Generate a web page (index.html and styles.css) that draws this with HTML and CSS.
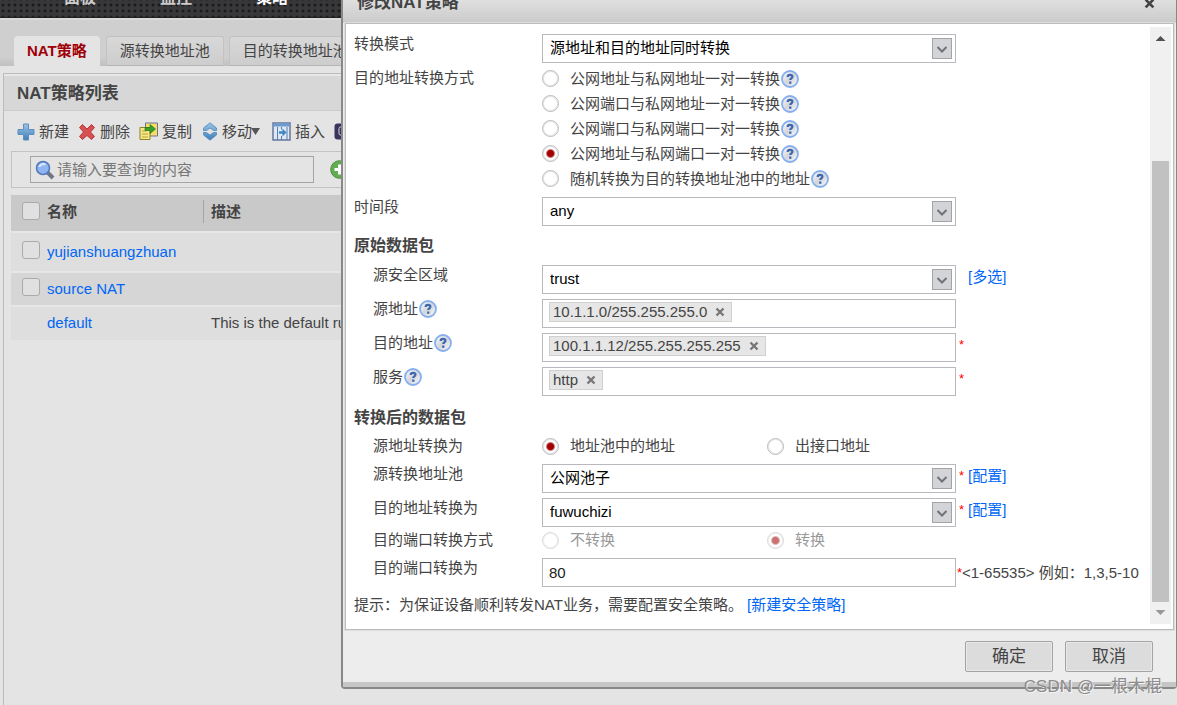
FILE: index.html
```html
<!DOCTYPE html>
<html lang="zh-CN">
<head>
<meta charset="utf-8">
<title>NAT策略</title>
<link rel="stylesheet" href="styles.css">
</head>
<body>
<svg class="defs" aria-hidden="true">
  <defs>
    <linearGradient id="blue" x1="0" y1="0" x2="0" y2="1"><stop offset="0" stop-color="#9cc4e6"/><stop offset="1" stop-color="#3f7fb8"/></linearGradient>
    <linearGradient id="ball" x1="0" y1="0" x2="1" y2="1"><stop offset="0" stop-color="#fff"/><stop offset=".5" stop-color="#d3d5da"/><stop offset="1" stop-color="#fff"/></linearGradient>
  </defs>
  <symbol id="help" viewBox="0 0 18 18">
    <circle cx="9" cy="9" r="8" fill="url(#ball)" stroke="#86aeee" stroke-width="1.8"/>
    <path d="M6.700 7C6.700 5.300 7.700 4.800 9 4.800c1.500 0 2.400.7 2.400 1.900 0 1.600-2.200 1.600-2.200 3.400" fill="none" stroke="#3d68ae" stroke-width="2.200"/>
    <rect x="8.100" y="11.500" width="2.300" height="2.300" fill="#3d68ae"/>
  </symbol>
  <symbol id="arrow" viewBox="0 0 20 21">
    <rect x=".5" y=".5" width="19" height="20" fill="#d2d4d8" stroke="#a2a4a8"/>
    <path d="M5.500 9 10 13.500l4.500-4.500" fill="none" stroke="#707276" stroke-width="2"/>
  </symbol>
  <symbol id="cross" viewBox="0 0 10 10"><path d="M1.500 1.500l7 7M8.500 1.500l-7 7" fill="none" stroke="currentColor" stroke-width="2.400"/></symbol>
</svg>

<header class="topnav"><a href="#">面板</a><a href="#">监控</a><a href="#" class="on">策略</a></header>
<nav class="tabs">
  <a href="#" class="tab active">NAT策略</a>
  <a href="#" class="tab">源转换地址池</a>
  <a href="#" class="tab">目的转换地址池</a>
</nav>

<main class="panel">
  <h1 class="panel-title">NAT策略列表</h1>
  <div class="panel-body">
    <div class="toolbar">
      <button type="button"><svg width="18" height="18" viewBox="0 0 18 18"><path d="M6.500 1h5v5.500H17v5h-5.500V17h-5v-5.500H1v-5h5.500z" fill="url(#blue)" stroke="#5d8fbe"/></svg>新建</button>
      <button type="button"><svg width="18" height="18" viewBox="0 0 18 18"><path d="M1.500 4.500 4.500 1.500 9 6l4.500-4.500 3 3L12.500 9l4 4.500-3 3L9 12.500l-4.500 4-3-3L5.500 9z" fill="#d94f4f" stroke="#b03b3b"/></svg>删除</button>
      <button type="button"><svg width="19" height="19" viewBox="0 0 19 19"><path d="M6.500 1h12v13h-12z" fill="#f5df62" stroke="#70709a"/><path d="M1 5.500h10v12H1z" fill="#f7e988" stroke="#8d8128"/><path d="M3 9h5M3 12h6M3 15h6" stroke="#b5a031"/><path d="M6 5.500h5V2.500l5.500 4.500-5.500 4.500v-3H6z" fill="#37a02d" stroke="#26751d" stroke-width=".7"/></svg>复制</button>
      <button type="button" class="move"><svg width="18" height="19" viewBox="0 0 18 19"><path d="M9 .8 15.500 6v2.500h-3L9 6 5.500 8.500h-3V6zM9 18.200 15.500 13v-2.500h-3L9 13l-3.500-2.500h-3V13z" fill="url(#blue)" stroke="#4c88bf" stroke-width=".8"/></svg>移动<svg class="caret" width="9" height="7" viewBox="0 0 9 7"><path d="M0 0h9L4.500 7z" fill="#555"/></svg></button>
      <button type="button"><svg width="19" height="19" viewBox="0 0 19 19"><path d="M1 1h17v17H1z" fill="#dfe8f3" stroke="#66769f" stroke-width="1.500"/><path d="M1.500 1.500h16v3h-16z" fill="#6c9bd0"/><path d="M5.500 5v13M9.500 5v2.500M9.500 14v4M15 5v13" stroke="#547fb5"/><path d="M7 9.300h3.500V6.500l4 4-4 4v-2.800H7z" fill="#3f86c6"/></svg>插入</button>
      <button type="button"><svg width="19" height="17" viewBox="0 0 19 17"><rect x=".5" y=".5" width="18" height="16" rx="3" fill="#39355f"/><rect x="5" y="4" width="4" height="8" rx="1.500" fill="none" stroke="#ddd"/></svg>清除</button>
    </div>
    <div class="searchbar">
      <label class="search"><svg width="20" height="20" viewBox="0 0 20 20"><path d="M12 12l6 6" stroke="#707784" stroke-width="4"/><circle cx="8" cy="8" r="6.500" fill="#8fb5f4" stroke="#5578b8" stroke-width="1.600"/><path d="M4.500 7a4 3 0 0 1 6-2.500" stroke="#dce9ff" stroke-width="2" fill="none"/></svg><input type="text" aria-label="查询" placeholder="请输入要查询的内容"></label>
      <button type="button" class="add" aria-label="添加"><svg width="19" height="19" viewBox="0 0 19 19"><circle cx="9.500" cy="9.500" r="8.800" fill="#62ad52" stroke="#4c8f3f"/><path d="M9.500 4.500v10M4.500 9.500h10" stroke="#fff" stroke-width="3"/></svg></button>
    </div>
    <table class="list">
      <thead><tr><th class="pick"><input type="checkbox" aria-label="全选"></th><th class="name">名称</th><th><span class="sep">描述</span></th></tr></thead>
      <tbody>
        <tr class="tall"><td class="pick"><input type="checkbox" aria-label="yujianshuangzhuan"></td><td><a href="#">yujianshuangzhuan</a></td><td></td></tr>
        <tr class="alt"><td class="pick"><input type="checkbox" aria-label="source NAT"></td><td><a href="#">source NAT</a></td><td></td></tr>
        <tr><td></td><td><a href="#">default</a></td><td>This is the default rule.</td></tr>
      </tbody>
    </table>
  </div>
</main>

<section class="dialog" role="dialog" aria-labelledby="dlg-title">
  <div class="dialog-head"><h2 id="dlg-title">修改NAT策略</h2><button type="button" class="close" aria-label="关闭"><svg width="11" height="11"><use href="#cross"/></svg></button></div>
  <div class="dialog-body">
    <form class="form">
      <div class="row"><label for="mode">转换模式</label><span class="select"><select id="mode"><option>源地址和目的地址同时转换</option></select><svg><use href="#arrow"/></svg></span></div>
      <div class="row group"><span class="label" id="lg">目的地址转换方式</span>
        <div class="radios" role="radiogroup" aria-labelledby="lg">
          <div><label><input type="radio" name="way">公网地址与私网地址一对一转换</label><svg class="help"><use href="#help"/></svg></div>
          <div><label><input type="radio" name="way">公网端口与私网地址一对一转换</label><svg class="help"><use href="#help"/></svg></div>
          <div><label><input type="radio" name="way">公网端口与私网端口一对一转换</label><svg class="help"><use href="#help"/></svg></div>
          <div><label><input type="radio" name="way" checked>公网地址与私网端口一对一转换</label><svg class="help"><use href="#help"/></svg></div>
          <div><label><input type="radio" name="way">随机转换为目的转换地址池中的地址</label><svg class="help"><use href="#help"/></svg></div>
        </div></div>
      <div class="row after"><label for="time">时间段</label><span class="select"><select id="time"><option>any</option></select><svg><use href="#arrow"/></svg></span></div>

      <h3>原始数据包</h3>
      <div class="row sub first"><label for="zone">源安全区域</label><span class="select"><select id="zone"><option>trust</option></select><svg><use href="#arrow"/></svg></span><span class="note"><i></i><a href="#">[多选]</a></span></div>
      <div class="row sub"><span class="label">源地址<svg class="help"><use href="#help"/></svg></span><div class="tags"><span class="tag">10.1.1.0/255.255.255.0<button type="button" aria-label="移除"><svg width="10" height="10"><use href="#cross"/></svg></button></span></div></div>
      <div class="row sub"><span class="label">目的地址<svg class="help"><use href="#help"/></svg></span><div class="tags"><span class="tag">100.1.1.12/255.255.255.255<button type="button" aria-label="移除"><svg width="10" height="10"><use href="#cross"/></svg></button></span></div><span class="note"><i>*</i></span></div>
      <div class="row sub"><span class="label">服务<svg class="help"><use href="#help"/></svg></span><div class="tags"><span class="tag">http<button type="button" aria-label="移除"><svg width="10" height="10"><use href="#cross"/></svg></button></span></div><span class="note"><i>*</i></span></div>

      <h3 class="translated">转换后的数据包</h3>
      <div class="row sub inline first"><span class="label">源地址转换为</span><div class="pair"><label><input type="radio" name="src" checked>地址池中的地址</label><label><input type="radio" name="src">出接口地址</label></div></div>
      <div class="row sub"><label for="pool">源转换地址池</label><span class="select"><select id="pool"><option>公网池子</option></select><svg><use href="#arrow"/></svg></span><span class="note"><i>*</i><a href="#">[配置]</a></span></div>
      <div class="row sub"><label for="dst">目的地址转换为</label><span class="select"><select id="dst"><option>fuwuchizi</option></select><svg><use href="#arrow"/></svg></span><span class="note"><i>*</i><a href="#">[配置]</a></span></div>
      <div class="row sub inline first"><span class="label">目的端口转换方式</span><div class="pair off"><label><input type="radio" name="port" disabled>不转换</label><label><input type="radio" name="port" checked disabled>转换</label></div></div>
      <div class="row sub"><label for="to">目的端口转换为</label><input class="text" id="to" type="text" value="80"><span class="note tight"><i>*</i>&lt;1-65535&gt; 例如：1,3,5-10</span></div>
      <p class="hint">提示：为保证设备顺利转发NAT业务，需要配置安全策略。 <a href="#">[新建安全策略]</a></p>
    </form>
    <div class="scroll" aria-hidden="true"><span class="up"></span><span class="thumb"></span><span class="down"></span></div>
  </div>
  <footer class="dialog-foot"><button type="button">确定</button><button type="button">取消</button></footer>
</section>
<div class="watermark">CSDN @一根木棍</div>
</body>
</html>
```
FILE: styles.css
```css
* { box-sizing: border-box; }
html { height: 100%; }
body {
  position: relative;
  display: flex;
  flex-direction: column;
  height: 100%;
  margin: 0;
  overflow: hidden;
  background: #e4e4e4;
  color: #444;
  font: 15px/18px "Liberation Sans", "Noto Sans CJK SC", sans-serif;
}
a { color: #0066f5; text-decoration: none; }
button, input, select { font: inherit; color: inherit; margin: 0; }
button { cursor: pointer; }
h1, h2, h3, p { margin: 0; }
.defs { position: absolute; width: 0; height: 0; }

.topnav {
  flex: none;
  display: flex;
  align-items: center;
  gap: 64px;
  height: 40px;
  margin-top: -22px;
  padding-left: 64px;
  background: radial-gradient(circle, #1c1c1c 1px, transparent 2px) 0 0 / 6px 6px, #38383a;
  border-bottom: 1px solid #222;
}
.topnav a { color: #ccc; font-size: 16px; font-weight: bold; }
.topnav .on { color: #fff; }
.tabs {
  flex: none;
  display: flex;
  align-items: flex-end;
  gap: 5px;
  height: 48px;
  padding-left: 14px;
  background: linear-gradient(#cfcfcf 80%, #c0c0c0);
  border-top: 2px solid #d8d8d8;
}
.tab {
  flex: none;
  height: 30px;
  padding: 0 13px;
  line-height: 27px;
  color: #444;
  background: linear-gradient(#d8d8d8, #cdcdcd);
  border: 1px solid #c2c2c2;
  border-bottom-color: #b5b5b5;
  border-radius: 3px 3px 0 0;
}
.tab.active { padding: 0 12px; margin-right: 1px; color: #a00008; font-weight: bold; background: #e4e4e4; border-color: #e4e4e4; }

.panel { flex: 1; margin: 7px 0 0 3px; border: solid #bbb; border-width: 1px 0 0 1px; }
.panel-title {
  height: 37px;
  padding-left: 13px;
  font-size: 17px;
  line-height: 36px;
  background: #d7d7d7;
  border-top: 2px solid #e8e8e8;
  border-bottom: 1px solid #ccc;
}
.panel-body { padding-left: 7px; }
.toolbar { display: flex; align-items: center; gap: 9px; height: 40px; padding: 1px 0 0 6px; white-space: nowrap; }
.toolbar button { display: flex; align-items: center; gap: 4px; flex: none; padding: 0; border: 0; background: none; }
.toolbar .move { gap: 3px; }
.toolbar .caret { margin: 0 3px 0 -4px; }
.searchbar { display: flex; align-items: center; gap: 16px; height: 37px; padding-left: 18px; border: 1px solid #c3c3c6; }
.search { display: flex; align-items: center; width: 284px; height: 27px; padding-left: 4px; border: 1px solid #a5a5a5; }
.search input { flex: 1; min-width: 0; padding: 0 0 0 2px; border: 0; background: none; outline: 0; }
.search input::placeholder { color: #777; opacity: 1; }
.add { display: flex; padding: 0; border: 0; background: none; }

.list { width: 100%; margin-top: 7px; border-collapse: collapse; table-layout: fixed; text-align: left; }
.list th, .list td { height: 34px; padding: 0 0 1px; border-top: 2px solid #e6e6e6; background: #dedede; }
.list th { height: 37px; padding-bottom: 2px; border-top: 0; background: #c9c9c9; }
.list .pick { width: 36px; padding: 0 0 4px 11px; }
.list .name { width: 164px; }
.list .tall td { height: 40px; }
.list .alt td { background: #d6d6d6; }
.sep { margin-left: -8px; padding: 3px 0 3px 7px; border-left: 1px solid #a5a5a5; }
.list input {
  appearance: none;
  display: block;
  width: 18px;
  height: 18px;
  background: #e0e0e0;
  border: 1px solid #aaa;
  border-radius: 3px;
}

.dialog {
  position: absolute;
  top: -17px;
  left: 341px;
  right: 0;
  background: #ededed;
  border: solid #888;
  border-width: 0 1px 2px 2px;
  border-radius: 0 0 4px 4px;
}
.dialog-head {
  display: flex;
  align-items: center;
  justify-content: space-between;
  height: 40px;
  padding: 0 21px 0 14px;
  background: linear-gradient(#f0f0f0, #cacaca);
}
.dialog-head h2 { font-size: 17px; line-height: 22px; }
.close { display: flex; padding: 0; border: 0; background: none; }
.dialog-body {
  display: flex;
  margin: 0 2px;
  padding: 3px 2px 5px 8px;
  background: #fff;
  border: 1px solid #bcbcbc;
  outline: 1px solid #ddd;
}
.form { flex: 1; min-width: 0; padding-top: 2px; }
.row { display: flex; align-items: flex-start; min-height: 29px; margin-top: 5px; }
.row > label:first-child, .row > .label { flex: none; display: flex; align-items: center; width: 188px; height: 19px; }
.row.sub > label:first-child, .row.sub > .label { padding-left: 19px; }
.row.group { margin-top: 3px; }
.row.group > .label { margin-top: 2px; }
.row.after { margin-top: 6px; }
.row.first { margin-top: 0; }
.row.inline { min-height: 26px; align-items: center; }
.select, .tags, .text { flex: 0 1 414px; min-width: 0; height: 29px; }
.select { position: relative; }
.select select {
  appearance: none;
  width: 100%;
  height: 100%;
  padding: 0 28px 2px 7px;
  color: #000;
  background: #fff;
  border: 1px solid #b8b8be;
  border-radius: 0;
}
.select svg { position: absolute; top: 4px; right: 4px; width: 20px; height: 21px; pointer-events: none; }
.text { padding: 0 6px; color: #222; border: 1px solid #b8b8be; }
.tags { padding: 2px 6px; border: 1px solid #b8b8be; }
.tag { display: inline-flex; align-items: center; height: 20px; padding: 0 6px 0 3px; background: #e6e6e6; border: 1px solid #d0d0d0; }
.tag button { display: flex; margin-left: 8px; padding: 0; border: 0; color: #777; background: none; }
.help { flex: none; width: 18px; height: 18px; margin-left: 1px; }
.radios div { display: flex; align-items: center; height: 25px; }
.radios label, .pair label { display: flex; align-items: center; gap: 11px; }
.pair { display: grid; grid-template-columns: 225px auto; }
.off { opacity: .55; }
input[type="radio"] {
  appearance: none;
  width: 17px;
  height: 17px;
  border: 1px solid #bbb;
  border-radius: 50%;
  background: #fff;
  box-shadow: inset 0 0 0 1px #e6e6e6;
}
input[type="radio"]:checked { background: radial-gradient(circle, #a00000 3px, #fff 5px); }
h3 { height: 39px; font-size: 16px; line-height: 39px; }
h3.translated { height: 35px; margin-top: 2px; }
.note { display: flex; align-items: center; height: 24px; white-space: nowrap; }
.note i { width: 12px; padding-left: 3px; color: #f00; font-size: 13px; font-style: normal; }
.note.tight { height: 29px; }
.note.tight i { width: 6px; padding-left: 1px; }
.hint { padding-top: 8px; line-height: 20px; }

.scroll { flex: none; display: flex; flex-direction: column; align-items: center; width: 21px; min-height: 597px; background: #f0f0f0; }
.up, .down { width: 10px; height: 5px; background: #505050; clip-path: polygon(50% 0, 100% 100%, 0 100%); }
.up { margin: 9px 0 120px; }
.down { margin: 8px 0 9px; background: #999; clip-path: polygon(0 0, 100% 0, 50% 100%); }
.thumb { flex: 1; width: 17px; background: #c1c1c1; }
.dialog-foot {
  display: flex;
  justify-content: flex-end;
  gap: 12px;
  padding: 11px 23px 10px;
  border-bottom: 5px solid #c6c6c6;
}
.dialog-foot button {
  width: 88px;
  height: 31px;
  padding: 0;
  font-size: 17px;
  background: #dcdcdc;
  border: 1px solid #a4a4a8;
  border-radius: 2px;
  box-shadow: inset 0 0 0 1px #e8e8e8;
}
.watermark {
  position: absolute;
  right: 15px;
  bottom: 8px;
  color: #8c8c8c;
  font-size: 17px;
  line-height: 20px;
  text-shadow: 1px 1px 0 #f4f4f4;
}
```
